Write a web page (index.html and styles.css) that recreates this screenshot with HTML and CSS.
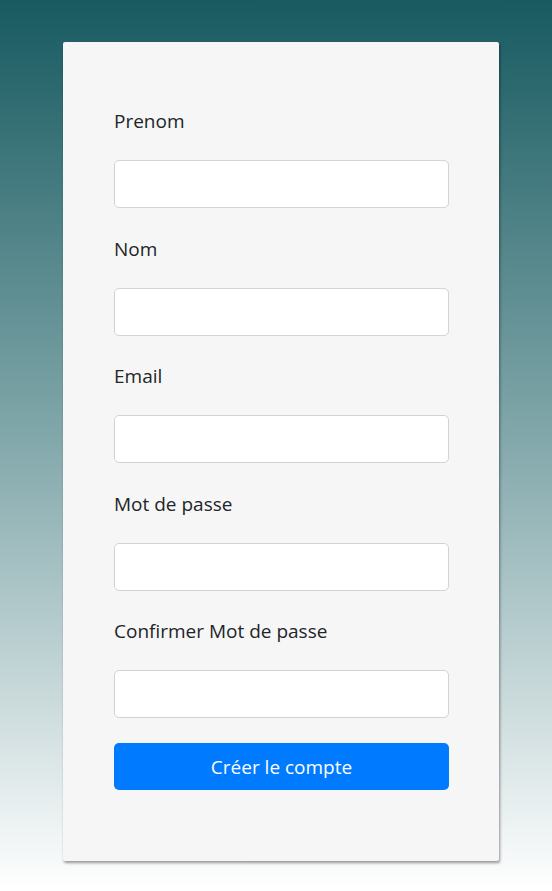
FILE: index.html
```html
<!DOCTYPE html>
<html lang="fr">
<head>
<meta charset="utf-8">
<title>Créer le compte</title>
<link rel="stylesheet" href="styles.css">
</head>
<body>
<main class="page">
  <form class="card">
    <div class="group">
      <label class="label" for="prenom">Prenom</label>
      <input class="input" id="prenom" type="text">
    </div>
    <div class="group">
      <label class="label" for="nom">Nom</label>
      <input class="input" id="nom" type="text">
    </div>
    <div class="group">
      <label class="label" for="email">Email</label>
      <input class="input" id="email" type="email">
    </div>
    <div class="group">
      <label class="label" for="mdp">Mot de passe</label>
      <input class="input" id="mdp" type="password">
    </div>
    <div class="group">
      <label class="label" for="mdp2">Confirmer Mot de passe</label>
      <input class="input" id="mdp2" type="password">
    </div>
    <button class="btn" type="button">Créer le compte</button>
  </form>
</main>
</body>
</html>
```
FILE: styles.css
```css
* { box-sizing: border-box; }
html, body { margin: 0; height: 100%; }
body {
  background: linear-gradient(to bottom, #175a60 0%, #84a9ac 50%, #ffffff 100%);
  font-family: "Open Sans", "Noto Sans", sans-serif;
  color: #212529;
}
.page {
  display: flex;
  justify-content: center;
  padding: 42px 0 0 10px;
}
.card {
  width: 436px;
  height: 819px;
  background: #f6f6f6;
  border-radius: 2px;
  box-shadow: 1px 2px 3px rgba(0,0,0,0.4);
  padding: 64px 50px 0 51px;
  display: flex;
  flex-direction: column;
}
.group {
  display: flex;
  flex-direction: column;
  margin-bottom: 25.5px;
}
.label {
  font-size: 19px;
  line-height: 30px;
  margin-bottom: 24px;
}
.input {
  height: 48px;
  border: 1px solid #ced4da;
  border-radius: 5px;
  background: #fff;
  font-size: 19px;
  padding: 0 16px;
}
.btn {
  margin-top: -0.5px;
  height: 47px;
  border: 0;
  border-radius: 5px;
  background: #007bff;
  color: #fff;
  font-family: inherit;
  font-size: 19px;
}
```
